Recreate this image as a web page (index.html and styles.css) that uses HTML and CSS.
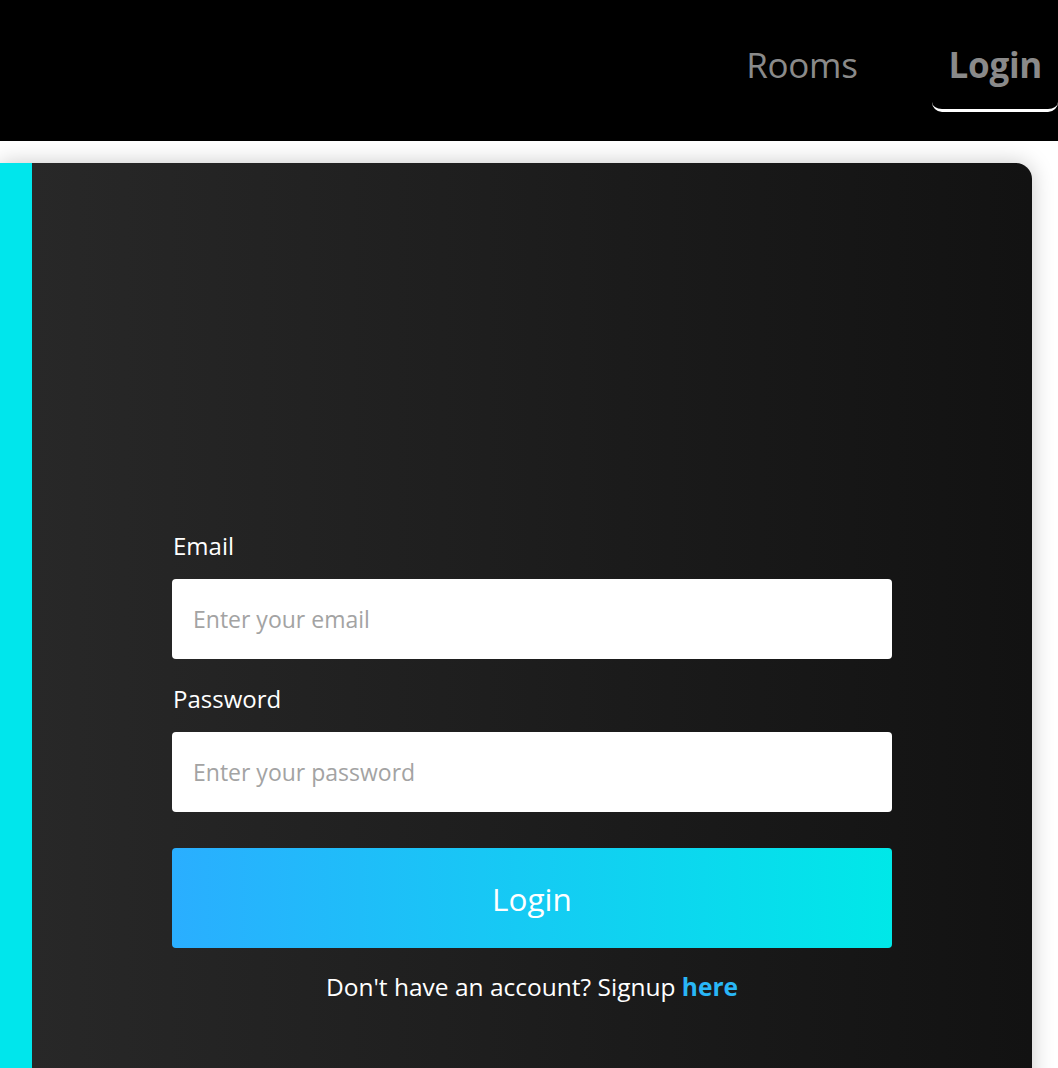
FILE: index.html
```html
<!DOCTYPE html>
<html lang="en">
<head>
<meta charset="utf-8">
<title>Login</title>
<link rel="stylesheet" href="styles.css">
</head>
<body>
<header class="nav">
  <a class="nav-link" href="#">Rooms</a>
  <a class="nav-link nav-link-active" href="#">Login</a>
</header>
<main class="page">
  <section class="card">
    <div class="card-accent"></div>
    <div class="card-body">
      <form class="form">
        <label class="field-label" for="email">Email</label>
        <input class="field-input" id="email" type="email" placeholder="Enter your email">
        <label class="field-label" for="password">Password</label>
        <input class="field-input" id="password" type="password" placeholder="Enter your password">
        <button class="submit" type="button">Login</button>
        <p class="signup">Don't have an account? Signup <a class="signup-link" href="#">here</a></p>
      </form>
    </div>
  </section>
</main>
</body>
</html>
```
FILE: styles.css
```css
* { box-sizing: border-box; }
html, body { margin: 0; padding: 0; background: #fff; }
body {
  font-family: "Open Sans", "Noto Sans", sans-serif;
  overflow: hidden;
  height: 1068px;
}
.nav {
  background: #000;
  height: 141px;
  display: flex;
  justify-content: flex-end;
  align-items: flex-start;
  gap: 58px;
}
.nav-link {
  color: #8a8a8a;
  text-decoration: none;
  font-size: 35px;
  line-height: 48px;
  padding: 41px 16px 21px;
  height: 112px;
  letter-spacing: -0.3px;
}
.nav-link-active {
  font-weight: 700;
  border-bottom: 3px solid #fff;
  border-radius: 0 0 10px 10px;
  padding-left: 17px;
}
.page { padding-top: 22px; padding-right: 26px; }
.card {
  display: flex;
  min-height: 940px;
  border-radius: 0 16px 0 0;
  box-shadow: 0 0 22px rgba(0,0,0,0.22);
  overflow: hidden;
}
.card-accent { width: 32px; background: #00e6ec; flex: none; }
.card-body {
  flex: 1;
  background: linear-gradient(to right, #282828, #121212);
  display: flex;
  justify-content: center;
  padding-top: 367px;
}
.form { width: 720px; display: flex; flex-direction: column; }
.field-label {
  color: #fff;
  font-size: 24px;
  line-height: 32px;
  margin-left: 1px;
  margin-bottom: 17px;
}
.field-input {
  height: 80px;
  border: none;
  border-radius: 4px;
  background: #fff;
  padding: 0 21px;
  font-family: inherit;
  font-size: 23px;
  color: #333;
  margin-bottom: 24px;
  outline: none;
}
.field-input::placeholder { color: #a3a3a3; }
.submit {
  margin-top: 12px;
  height: 100px;
  border: none;
  border-radius: 4px;
  background: linear-gradient(to right, #2aaeff, #00e8e8);
  color: #fff;
  font-family: inherit;
  font-size: 31.5px;
  cursor: pointer;
}
.signup {
  color: #fff;
  text-align: center;
  font-size: 24.5px;
  line-height: 30px;
  margin: 24px 0 0;
}
.signup-link { color: #29b6f6; font-weight: 700; text-decoration: none; }
```
